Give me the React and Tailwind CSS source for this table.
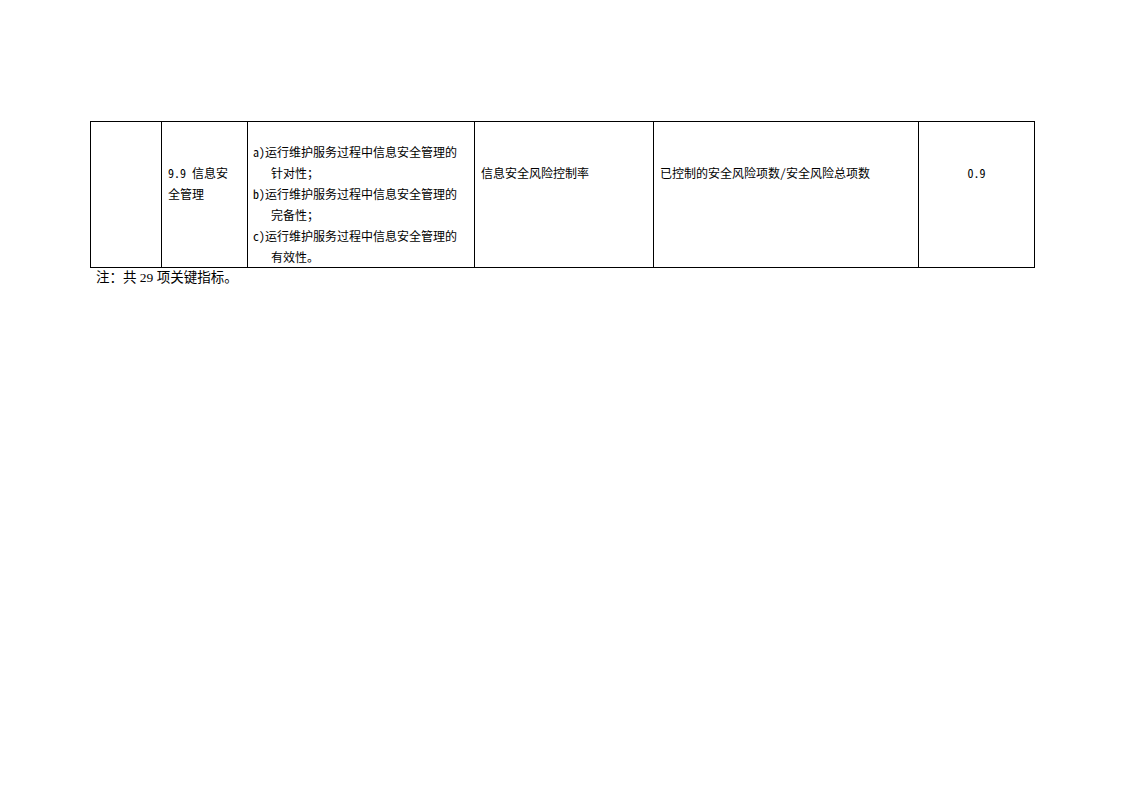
const items = [
    { mark: 'a)', head: '运行维护服务过程中信息安全管理的', tail: '针对性；' },
    { mark: 'b)', head: '运行维护服务过程中信息安全管理的', tail: '完备性；' },
    { mark: 'c)', head: '运行维护服务过程中信息安全管理的', tail: '有效性。' },
];

const cell = 'border border-black align-top p-0';

export default function App() {
    return (
        <div
            className="min-h-[793px] w-[1122px] bg-white pl-[90px] pt-[121px] text-black"
            style={{ fontFamily: '"Noto Sans Mono CJK SC", "Noto Sans CJK SC", monospace' }}
        >
            <table className="w-[944px] table-fixed border-collapse text-[12px] leading-[21px]">
                <colgroup>
                    <col className="w-[71px]" />
                    <col className="w-[86px]" />
                    <col className="w-[227px]" />
                    <col className="w-[179px]" />
                    <col className="w-[265px]" />
                    <col className="w-[116px]" />
                </colgroup>
                <tbody>
                    <tr className="h-[146px]">
                        <td className={cell}></td>
                        <td className={cell}>
                            <div className="pl-[6px] pt-[40px]">
                                <div className="whitespace-pre">9.9 信息安</div>
                                <div>全管理</div>
                            </div>
                        </td>
                        <td className={cell}>
                            <div className="pl-[5px] pt-[19px]">
                                {items.map((it) => (
                                    <div key={it.mark}>
                                        <div className="whitespace-nowrap">
                                            {it.mark}
                                            {it.head}
                                        </div>
                                        <div className="pl-[18px]">{it.tail}</div>
                                    </div>
                                ))}
                            </div>
                        </td>
                        <td className={cell}>
                            <div className="pl-[6px] pt-[40px]">信息安全风险控制率</div>
                        </td>
                        <td className={cell}>
                            <div className="pl-[6px] pt-[40px]">已控制的安全风险项数/安全风险总项数</div>
                        </td>
                        <td className={cell}>
                            <div className="pt-[40px] text-center">0.9</div>
                        </td>
                    </tr>
                </tbody>
            </table>
            <p
                className="pl-[6px] text-[13.5px] leading-[20px]"
                style={{ fontFamily: '"Liberation Serif", "Noto Sans CJK SC", serif' }}
            >
                注：共 29 项关键指标。
            </p>
        </div>
    );
}
